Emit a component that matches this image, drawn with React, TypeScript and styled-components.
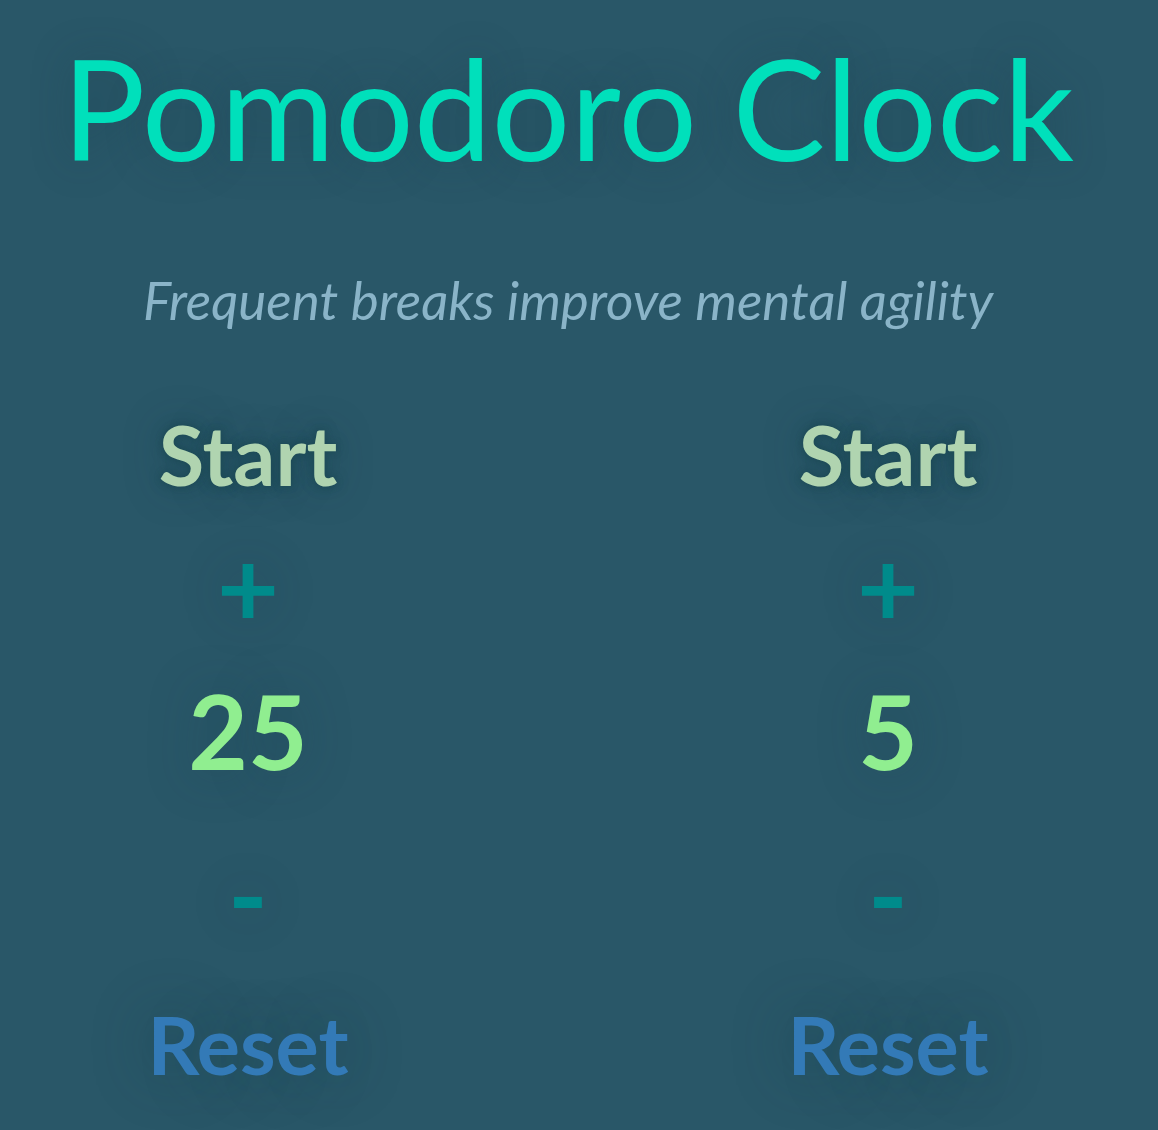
import styled, { createGlobalStyle } from "styled-components";

const GlobalStyle = createGlobalStyle`
  html, body {
    margin: 0;
    padding: 0;
    background: #295768;
  }
  body {
    font-family: Lato, "Open Sans", sans-serif;
    overflow: hidden;
  }
`

const Page = styled.div`
    min-height: 1130px;
    background: #295768;
    text-align: center;
    padding: 25px 22px 0 0;
    box-sizing: border-box;
`

const Title = styled.h1`
    margin: 0;
    font-size: 139px;
    font-weight: 400;
    line-height: 1.2;
    color: #00e0bb;
    text-shadow: 0 0 40px rgba(20, 60, 75, 0.35);
`

const Tagline = styled.p`
    margin: 76px 0 0;
    font-size: 53px;
    font-weight: 400;
    font-style: italic;
    line-height: 1.2;
    color: #8ab4c8;
`

const Timers = styled.div`
    display: grid;
    grid-template-columns: 400px 400px;
    column-gap: 240px;
    justify-content: center;
    margin-top: 74px;
`

const Timer = styled.div`
    display: flex;
    flex-direction: column;
    align-items: center;
`

const StartButton = styled.div`
    font-size: 83px;
    font-weight: 700;
    line-height: 1.2;
    color: #b0d4b0;
    cursor: pointer;
    text-shadow: 0 0 6px #1c4a55, 0 0 12px rgba(28, 74, 85, 0.6), 0 0 40px rgba(20, 60, 75, 0.35);
`

const Adjust = styled.div<{ $gap: number }>`
    margin-top: ${p => p.$gap}px;
    font-size: 107px;
    font-weight: 700;
    line-height: 1.2;
    color: #008b8b;
    cursor: pointer;
    text-shadow: 0 0 50px rgba(20, 60, 75, 0.3);
`

const Minutes = styled.div`
    margin-top: 19px;
    font-size: 103px;
    font-weight: 700;
    line-height: 1.2;
    color: #90ee90;
    text-shadow: 0 0 50px rgba(20, 60, 75, 0.35);
`

const ResetButton = styled.div`
    margin-top: 37px;
    font-size: 81px;
    font-weight: 700;
    line-height: 1.2;
    color: #337ab7;
    cursor: pointer;
    text-shadow: 0 0 60px rgba(20, 60, 75, 0.45);
`

const timers = [
    { id: "session", minutes: 25 },
    { id: "break", minutes: 5 },
]

const App = () => {
    return (
        <Page>
            <GlobalStyle />
            <Title>Pomodoro Clock</Title>
            <Tagline>Frequent breaks improve mental agility</Tagline>
            <Timers>
                {timers.map(timer => (
                    <Timer key={timer.id}>
                        <StartButton>Start</StartButton>
                        <Adjust $gap={17}>+</Adjust>
                        <Minutes>{timer.minutes}</Minutes>
                        <Adjust $gap={37}>-</Adjust>
                        <ResetButton>Reset</ResetButton>
                    </Timer>
                ))}
            </Timers>
        </Page>
    )
}

export default App;
